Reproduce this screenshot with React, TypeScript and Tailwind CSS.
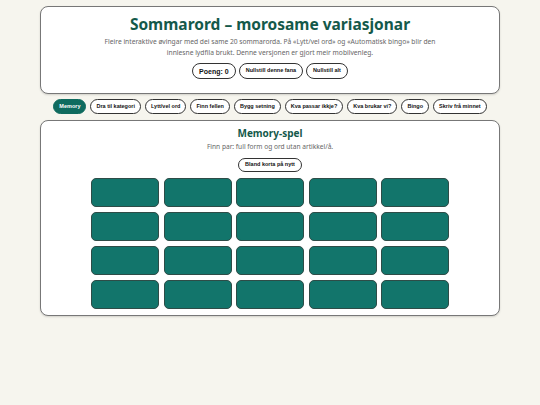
import React, { useState } from "react";

const tabs = [
  "Memory",
  "Dra til kategori",
  "Lytt/vel ord",
  "Finn fellen",
  "Bygg setning",
  "Kva passar ikkje?",
  "Kva brukar vi?",
  "Bingo",
  "Skriv frå minnet",
];

const pill =
  "rounded-full border border-[#333] bg-white px-[6px] text-[#111] font-bold leading-none [font-family:'Liberation_Sans',Arial,sans-serif]";

export default function App() {
  const [active, setActive] = useState(0);
  const [score] = useState(0);

  return (
    <div className="min-h-[405px] bg-[#f6f5ee] pt-[6px] [font-family:'Noto_Sans',sans-serif]">
      <div className="mx-auto w-[460px] rounded-[8px] border border-[#777] bg-white px-4 pt-[5px] pb-[14px] text-center shadow-[0_1px_2px_rgba(0,0,0,0.15)]">
        <h1 className="text-[15.5px] font-bold leading-[24px] text-[#14594a]">
          Sommarord – morosame variasjonar
        </h1>
        <p className="mx-auto w-[345px] text-[6.7px] leading-[11px] text-[#666]">
          Fleire interaktive øvingar med dei same 20 sommarorda. På «Lytt/vel ord» og «Automatisk bingo» blir den
          innlesne lydfila brukt. Denne versjonen er gjort meir mobilvenleg.
        </p>
        <div className="mt-[5px] flex justify-center gap-[3px]">
          <span className={`${pill} flex h-[16px] items-center text-[7px]`}>Poeng: {score}</span>
          <button className={`${pill} h-[16px] text-[5.5px]`}>Nullstill denne fana</button>
          <button className={`${pill} h-[16px] text-[5.5px]`}>Nullstill alt</button>
        </div>
      </div>

      <div className="mt-[5px] flex justify-center gap-[4px]">
        {tabs.map((t, i) => (
          <button
            key={t}
            onClick={() => setActive(i)}
            className={`h-[15px] rounded-full border px-[5px] text-[5.5px] font-bold leading-none [font-family:'Liberation_Sans',Arial,sans-serif] ${
              i === active
                ? "border-[#0f6b5f] bg-[#0f6b5f] text-white"
                : "border-[#333] bg-white text-[#111]"
            }`}
          >
            {t}
          </button>
        ))}
      </div>

      <div className="mx-auto mt-[6px] w-[460px] rounded-[8px] border border-[#777] bg-white pt-[5px] pb-[6px] text-center shadow-[0_1px_2px_rgba(0,0,0,0.15)]">
        <h2 className="text-[10px] font-bold leading-[14px] text-[#14594a]">Memory-spel</h2>
        <p className="mt-[2px] text-[6.6px] leading-[10px] text-[#666]">Finn par: full form og ord utan artikkel/å.</p>
        <div className="mt-[6px] flex justify-center">
          <button className={`${pill} h-[14px] text-[5.5px]`}>Bland korta på nytt</button>
        </div>
        <div className="mx-auto mt-[6px] grid w-[358px] grid-cols-5 gap-x-[4.5px] gap-y-[5px]">
          {Array.from({ length: 20 }).map((_, i) => (
            <div
              key={i}
              className="h-[29px] rounded-[5px] border border-[#2e4c47] bg-[#12756b]"
            />
          ))}
        </div>
      </div>
    </div>
  );
}
